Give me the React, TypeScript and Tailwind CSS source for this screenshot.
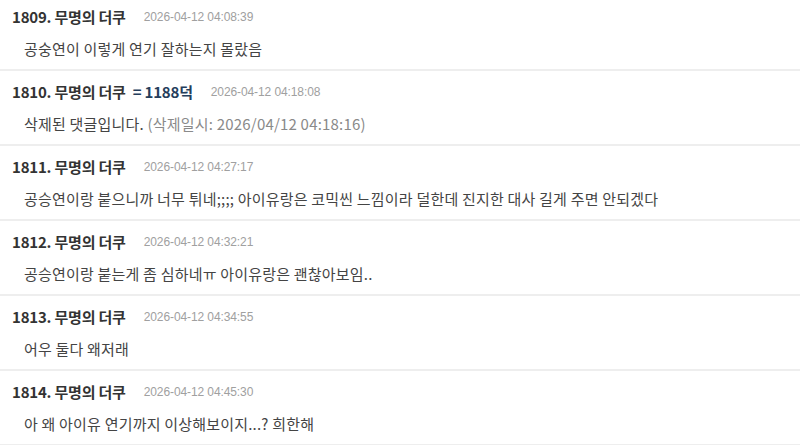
import React from "react";

type Comment = {
  no: number;
  name: string;
  badge?: string;
  date: string;
  body: string;
  deletedAt?: string;
};

const comments: Comment[] = [
  { no: 1809, name: "무명의 더쿠", date: "2026-04-12 04:08:39", body: "공숭연이 이렇게 연기 잘하는지 몰랐음" },
  { no: 1810, name: "무명의 더쿠", badge: "= 1188덕", date: "2026-04-12 04:18:08", body: "삭제된 댓글입니다.", deletedAt: "(삭제일시: 2026/04/12 04:18:16)" },
  { no: 1811, name: "무명의 더쿠", date: "2026-04-12 04:27:17", body: "공승연이랑 붙으니까 너무 튀네;;;; 아이유랑은 코믹씬 느낌이라 덜한데 진지한 대사 길게 주면 안되겠다" },
  { no: 1812, name: "무명의 더쿠", date: "2026-04-12 04:32:21", body: "공승연이랑 붙는게 좀 심하네ㅠ 아이유랑은 괜찮아보임.." },
  { no: 1813, name: "무명의 더쿠", date: "2026-04-12 04:34:55", body: "어우 둘다 왜저래" },
  { no: 1814, name: "무명의 더쿠", date: "2026-04-12 04:45:30", body: "아 왜 아이유 연기까지 이상해보이지...? 희한해" },
];

const font = { fontFamily: '"Noto Sans CJK KR", "Noto Sans", sans-serif' };
const dateFont = { fontFamily: '"Liberation Sans", Arial, sans-serif' };

export default function App() {
  return (
    <div className="w-[800px] h-[445px] overflow-hidden bg-white" style={font}>
      <ul className="-mt-1">
        {comments.map((c) => (
          <li key={c.no} className="border-b-2 border-[#eeeeee] pt-[11px] pb-[9px]">
            <div className="flex items-center h-5 pl-3">
              <span className="text-[15px] font-bold text-[#333] tracking-[-0.2px]">
                {c.no}. {c.name}
              </span>
              {c.badge && (
                <span className="ml-[7px] text-[15px] font-bold text-[#253e5c] tracking-[-0.2px]">{c.badge}</span>
              )}
              <span className="ml-[18px] text-[12px] text-[#a0a0a0] tracking-[-0.1px]" style={dateFont}>
                {c.date}
              </span>
            </div>
            <div className="mt-[11px] h-[22px] leading-[22px] pl-6 text-[15px] text-[#444] tracking-[0.2px] whitespace-nowrap">
              {c.body}
              {c.deletedAt && <span className="text-[#8a8a8a]"> {c.deletedAt}</span>}
            </div>
          </li>
        ))}
      </ul>
    </div>
  );
}
